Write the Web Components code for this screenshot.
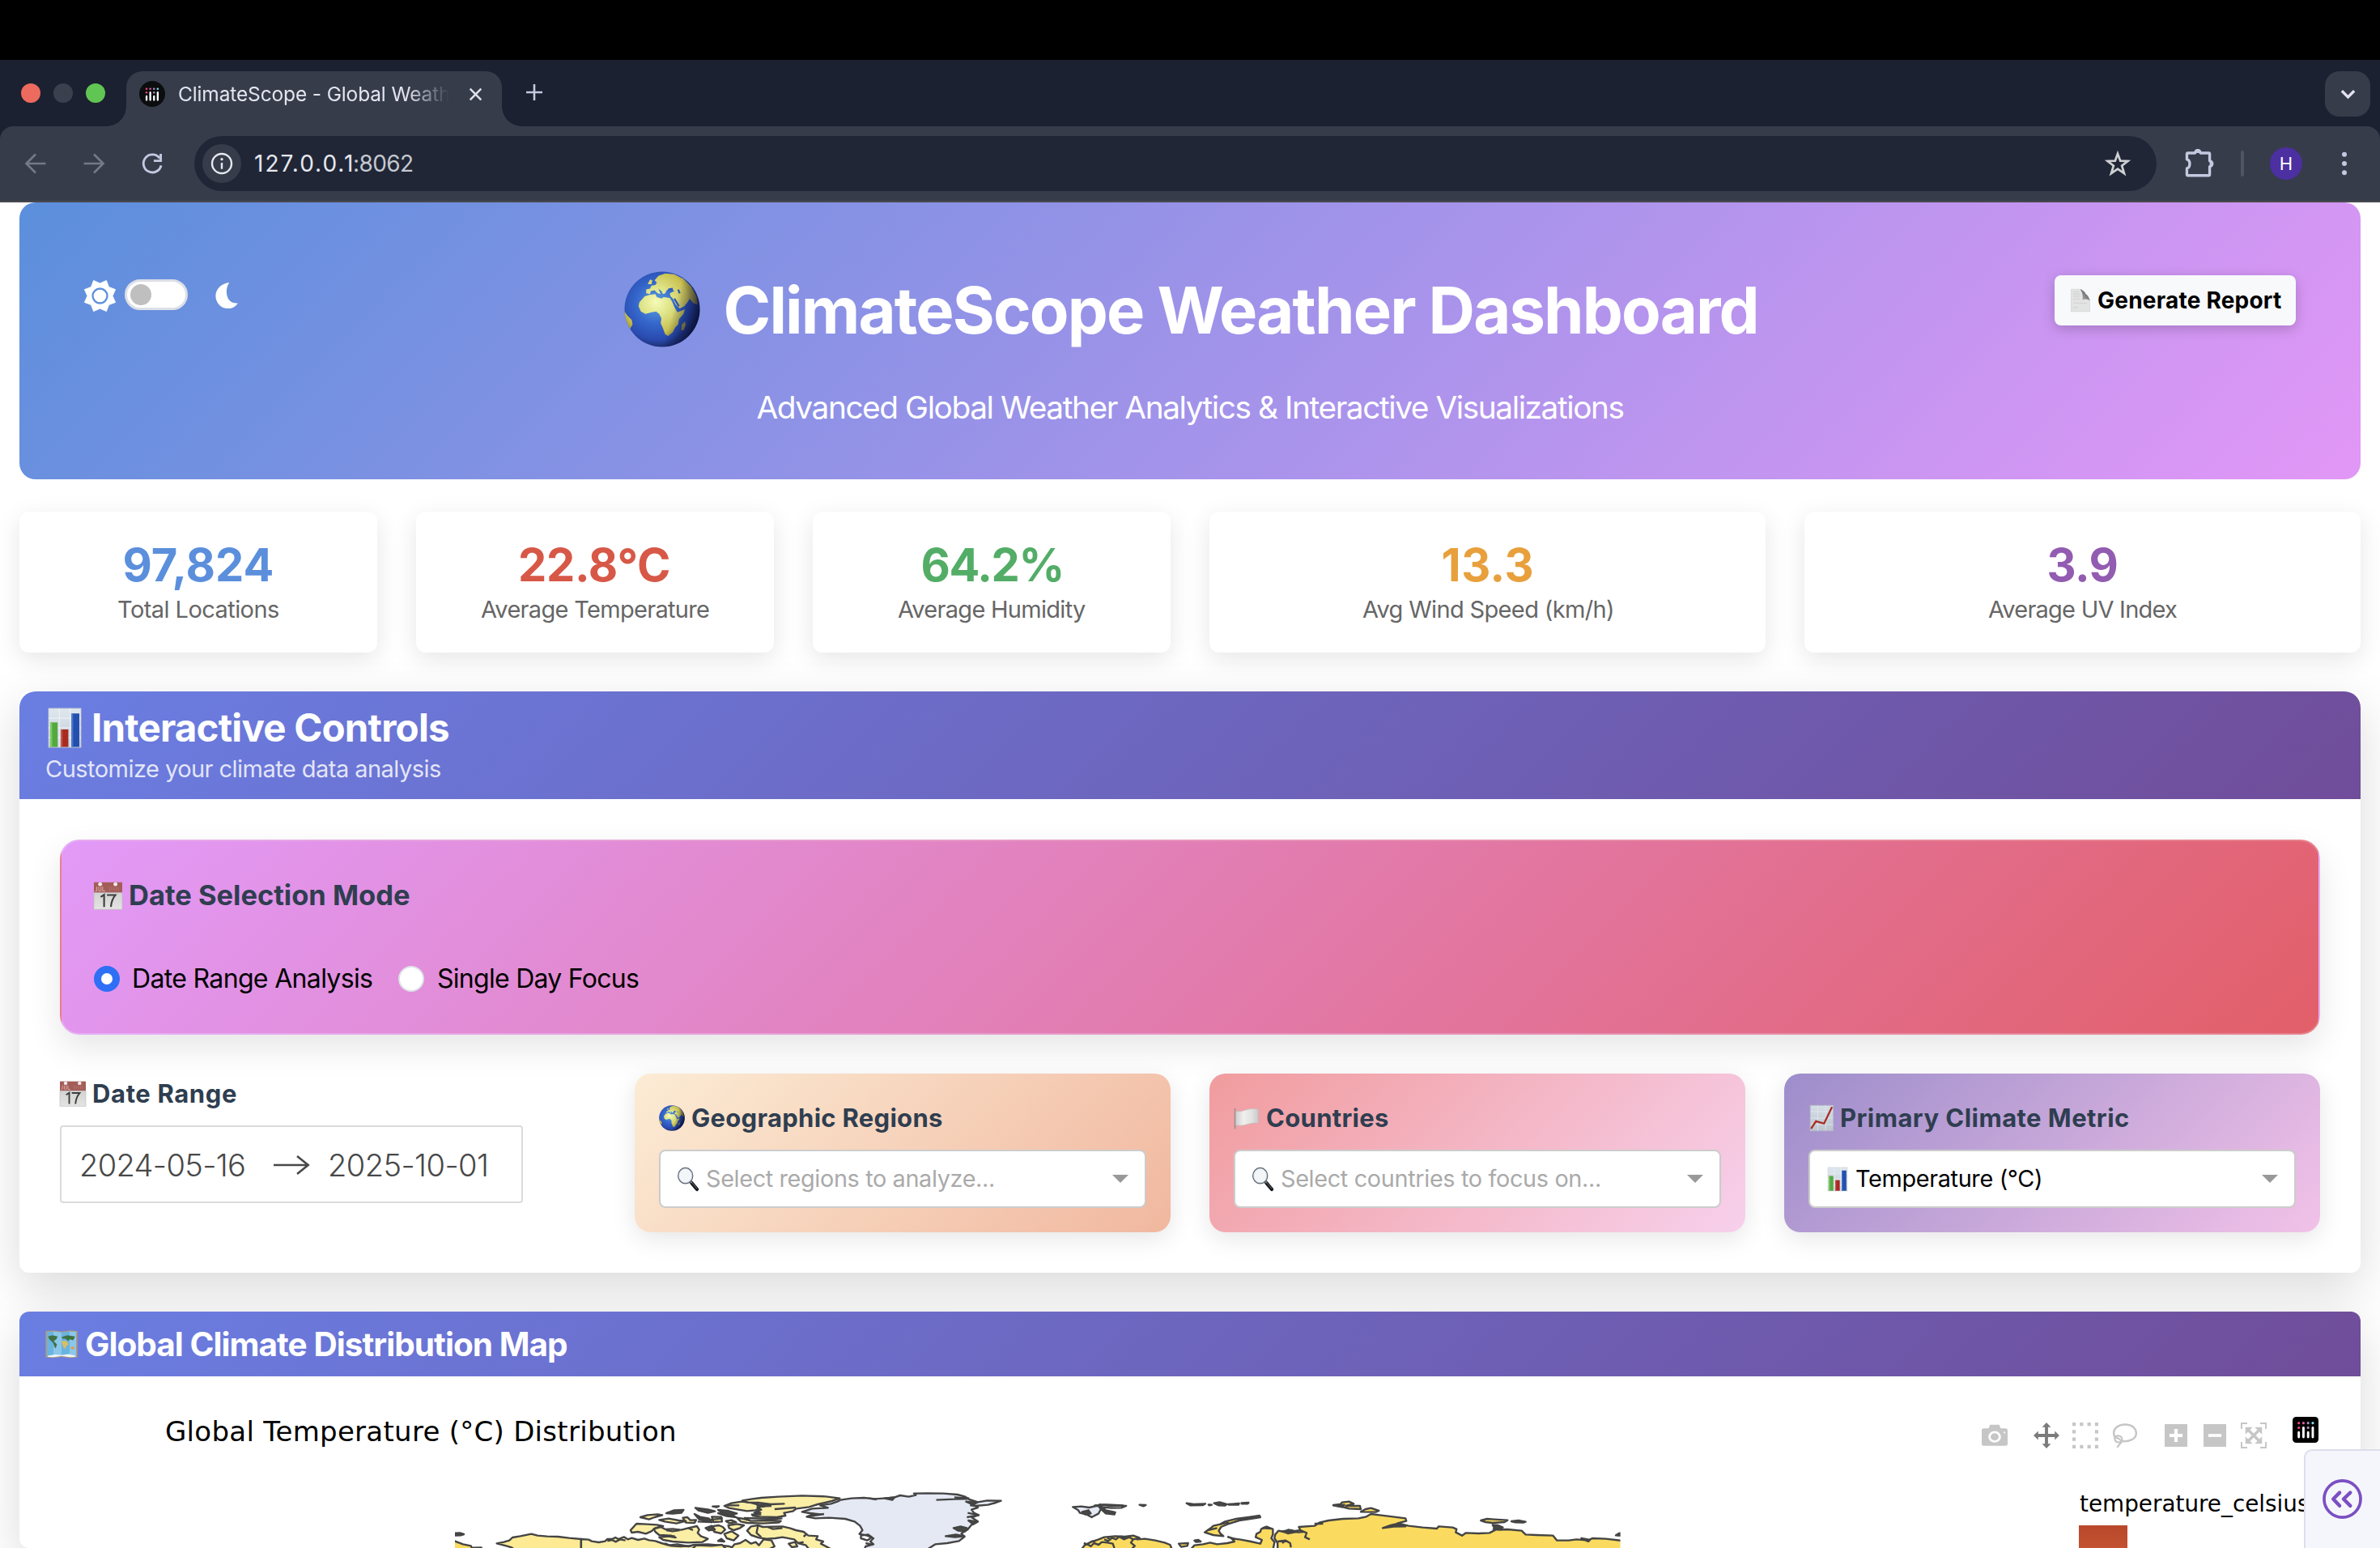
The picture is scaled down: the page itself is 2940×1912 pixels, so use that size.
<!DOCTYPE html>
<html lang="en">
<head>
<meta charset="utf-8">
<title>ClimateScope - Global Weather Dashboard</title>
<style>
html,body{margin:0;height:1912px;width:2940px;overflow:hidden;background:#fff;font-family:Inter,"Liberation Sans",sans-serif}
</style>
</head>
<body>
<climate-app></climate-app>
<script>
const define=(name,html,init)=>customElements.define(name,class extends HTMLElement{
  connectedCallback(){
    if(this.shadowRoot)return;
    const root=this.attachShadow({mode:'open'});
    root.innerHTML=typeof html==='function'?html(this):html;
    if(init)init(this,root);
  }
});
const attr=(e,n,d='')=>e.hasAttribute(n)?e.getAttribute(n):d;

/* One line of text tracked so that its ink fills the given width */
const pen=document.createElement('canvas').getContext('2d');
define('fit-text',e=>`<style>:host{display:block;flex:none;white-space:pre;width:${attr(e,'w')}px;
 font:${attr(e,'weight','400')} ${attr(e,'size')}px/${attr(e,'lh','50')}px ${attr(e,'font','Inter')},sans-serif;color:${attr(e,'color','inherit')}}</style><slot></slot>`,
 e=>{
  const t=e.textContent;
  pen.font=`${attr(e,'weight','400')} ${attr(e,'size')}px ${attr(e,'font','Inter')}, sans-serif`;
  const m=pen.measureText(t),ink=m.actualBoundingBoxLeft+m.actualBoundingBoxRight;
  e.style.letterSpacing=((+attr(e,'w')-ink)/(t.length-1)).toFixed(3)+'px';
  e.style.textIndent=m.actualBoundingBoxLeft.toFixed(2)+'px';
 });

const GLOBE=`<defs><radialGradient id="o" cx=".42" cy=".42" r=".6"><stop offset="0" stop-color="#5fa3d8"/><stop offset=".45" stop-color="#3567cc"/><stop offset=".8" stop-color="#2a4bb0"/><stop offset="1" stop-color="#1c2c6b"/></radialGradient>
<radialGradient id="l" gradientUnits="userSpaceOnUse" cx="42" cy="40" r="55"><stop offset="0" stop-color="#f6fbb8"/><stop offset=".35" stop-color="#dfe488"/><stop offset=".75" stop-color="#c9c050"/><stop offset="1" stop-color="#8c8338"/></radialGradient>
<linearGradient id="s" x1="0" y1=".3" x2="1" y2=".6"><stop offset=".65" stop-color="#061040" stop-opacity="0"/><stop offset="1" stop-color="#060a28" stop-opacity=".75"/></linearGradient><clipPath id="c"><circle cx="50" cy="50" r="49.5"/></clipPath></defs>
<circle cx="50" cy="50" r="49.5" fill="url(#o)"/><g clip-path="url(#c)" fill="url(#l)">
<path d="M27 33L33 31 41 30 43 34 49 36 52 34 60 35 63 40 66 47 70 54 80 50 78 56 72 63 71 70 67 74 64 80 58 85 54 83 51 75 48 68 49 62 46 56 42 53 36 54 28 56 22 53 19 46 20 41Z"/>
<path d="M29 29L29 24 34 23 36 19 41 18 43 15 40 12 45 6 54 3 66 4 78 10 88 20 95 33 97 44 91 42 86 36 84 40 79 46 73 49 68 44 64 36 61 33 60 29 66 26 61 22 56 25 54 29 51 30 49 26 45 23 48 30 44 29 40 25 35 26 34 30Z"/>
<path d="M31 17L34 11 37 12 36 17ZM76 70L80 66 81 71 78 78 75 77ZM0 52L4 58 10 64 11 70 7 77 8 84 2 78Z"/></g>
<g clip-path="url(#c)"><path d="M66 36L72 46M71 24L73 29M58 24L64 23" stroke="#2a56bb" stroke-width="2.4" fill="none"/><circle cx="50" cy="50" r="49.5" fill="url(#s)"/></g>`;
const CAL=`<defs><linearGradient id="g" x2="0" y2="1"><stop offset="0" stop-color="#d2d2d2"/><stop offset="1" stop-color="#e4e4e2"/></linearGradient></defs>
<path d="M0 38H100V98H0Z" fill="url(#g)" stroke="#bdbdbd" stroke-width="2"/><path d="M0 2H100V38H0Z" fill="#a35d59"/><g fill="#fff" fill-opacity=".85"><circle cx="22" cy="9" r="7"/><circle cx="76" cy="9" r="7"/></g>
<path d="M10 18v13q-3 4-5 1M17 18v13q4 5 8 0v-13M31 18v15h9" stroke="#d9aaa5" stroke-width="3" fill="none"/><path d="M55 18v14M63 18v14M71 18v14M79 18v14M87 18v14" stroke="#b4716c" stroke-width="3"/>
<path d="M24 54L36 46V89M46 47H76Q62 64 60 89" stroke="#3d3d3d" stroke-width="6" fill="none"/>`;
const BARS=`<defs><linearGradient id="b" x2="0" y2="1"><stop offset="0" stop-color="#dfe7ee"/><stop offset="1" stop-color="#c3cbd6"/></linearGradient></defs><rect width="100" height="100" fill="url(#b)" stroke="#c3ccd4" stroke-width="2"/>
<path d="M0 25H100M0 50H100M0 75H100M33 0V100M67 0V100" stroke="#f3f6f8" stroke-width="2"/>
<path d="M5 36H28V99H5Z" fill="#53a93f"/><path d="M5 36H11V99H5Z" fill="#7ccb61"/><path d="M38 54H61V99H38Z" fill="#a92a1f"/><path d="M38 54H43V99H38Z" fill="#c5574b"/><path d="M71 13H95V99H71Z" fill="#234fae"/><path d="M71 13H76V99H71Z" fill="#4578cf"/>`;
const MAG=`<path d="M62 64L86 93" stroke="#16181b" stroke-width="15" stroke-linecap="round"/><path d="M66 66L86 90" stroke="#777d85" stroke-width="3"/><path d="M55 55L64 66" stroke="#888" stroke-width="7"/><ellipse cx="37" cy="35" rx="31" ry="33" fill="#f3f6f8" stroke="#5c6470" stroke-width="5"/><ellipse cx="37" cy="35" rx="28" ry="30" fill="none" stroke="#c7d3de" stroke-width="2.5"/>`;
const PLOTLY=`<g><circle cx="24" cy="24" r="5" fill="#ef4278"/><circle cx="42" cy="24" r="5" fill="#d3639e"/><circle cx="60" cy="24" r="5" fill="#a98cc4"/><circle cx="78" cy="24" r="5" fill="#7fdbf2"/><circle cx="24" cy="42" r="5" fill="#ef4278"/><circle cx="60" cy="42" r="5" fill="#a98cc4"/><path d="M24 60V78M42 42V78M60 60V78M78 42V78" stroke="#fff" stroke-width="9" stroke-linecap="round"/></g>`;
/* Eight-pointed sun outline */
const RAYS=Array.from({length:16},(_,i)=>{const a=(22.5+i*22.5)*Math.PI/180,r=i%2?40:53;return (50+r*Math.cos(a)).toFixed(1)+' '+(50+r*Math.sin(a)).toFixed(1)}).join(' ');
const ICONS={
 globe:GLOBE,cal:CAL,bars:BARS,mag:MAG,
 favicon:`<circle cx="50" cy="50" r="50" fill="#0c0d0e"/><g transform="translate(9 11) scale(.8)">${PLOTLY}</g>`,
 plotly:`<rect width="100" height="100" rx="14" fill="#000"/>${PLOTLY}`,
 trend:`<defs><linearGradient id="b" x2="0" y2="1"><stop offset="0" stop-color="#d5dde6"/><stop offset="1" stop-color="#bdc5cf"/></linearGradient></defs><rect x="7" y="1" width="88" height="98" fill="url(#b)" stroke="#b7bcc6" stroke-width="3"/><path d="M7 25H95M7 50H95M7 75H95M36 1V99M66 1V99" stroke="#e8edf2" stroke-width="2"/><path d="M10 91L29 62 60 71 91 7" fill="none" stroke="#a92a20" stroke-width="7"/>`,
 flag:`<defs><linearGradient id="f"><stop offset="0" stop-color="#cfcfcf"/><stop offset=".35" stop-color="#f0f0ee"/><stop offset=".7" stop-color="#e2e2e0"/><stop offset="1" stop-color="#c9c9c9"/></linearGradient></defs><path d="M5 12V92" stroke="#9a8f90" stroke-width="5"/><path d="M8 22C30 32 58 6 95 16V70C62 64 40 86 8 77Z" fill="url(#f)" stroke="#bdb5b6" stroke-width="2"/>`,
 page:`<defs><linearGradient id="d" x1="1" x2="0" y2="1"><stop offset="0" stop-color="#444"/><stop offset="1" stop-color="#bbb"/></linearGradient></defs><path d="M2 1H55L98 48V99H2Z" fill="#e3e3e3" stroke="#c9c9c9" stroke-width="2"/><path d="M12 12H42M12 22H48M12 32H48M12 44H46M12 62H84M12 82H36" stroke="#cacaca" stroke-width="3"/><path d="M48 1Q66 20 60 48Q80 40 98 50Q92 30 78 22Q66 4 48 1Z" fill="url(#d)"/>`,
 worldmap:`<path d="M1 3L25 1 50 5 75 1 99 3V96L75 98 50 94 25 98 1 96Z" fill="#b39c78"/><path d="M5 6L25 4 50 8 75 4 95 6V92L75 94 50 90 25 94 5 92Z" fill="#69b4e0"/><path d="M25 4L50 8V90L25 94ZM75 4L95 6V92L75 94Z" fill="#8cc6ea"/><path d="M8 22L22 18 38 22 34 32 26 38 32 46 36 50 32 64 28 58 24 44 14 34ZM50 24L68 18 92 22 86 36 76 32 70 38 62 30 54 30Z" fill="#3f7242"/><path d="M50 38L66 38 72 50 66 54 62 66 56 60 52 48Z" fill="#d9bd63"/><path d="M78 60L88 58 90 66 82 68Z" fill="#e39a3e"/><path d="M8 90L30 86 50 88 72 84 93 90V94L75 95 50 91 25 95 7 94Z" fill="#eef5f8"/>`,
 sun:`<polygon points="${RAYS}" fill="#fff" stroke="#fff" stroke-width="2" stroke-linejoin="round"/><circle cx="50" cy="50" r="23" fill="none" stroke="#5f90de" stroke-width="6"/>`,
 moon:`<path d="M62 3C42 28 48 82 96 78C82 100 46 104 24 86C-6 58 6 10 62 3Z" fill="#fff"/>`,
 back:`<path d="M76 50H28M50 26L26 50 50 74" fill="none" stroke="#747986" stroke-width="5.6"/>`,
 fwd:`<path d="M24 50H72M50 26L74 50 50 74" fill="none" stroke="#747986" stroke-width="5.6"/>`,
 reload:`<path d="M69 36A23 23 0 1 0 73 55" fill="none" stroke="#c4c9e0" stroke-width="6"/><path d="M72 25V43H54" fill="none" stroke="#c4c9e0" stroke-width="6"/>`,
 info:`<circle cx="50" cy="50" r="50" fill="#373c4b"/><circle cx="50" cy="50" r="25" fill="none" stroke="#e6e8ee" stroke-width="5"/><path d="M50 48V64" stroke="#e6e8ee" stroke-width="5"/><circle cx="50" cy="39" r="3.4" fill="#e6e8ee"/>`,
 star:`<path d="M50 12L60 39.500 89 40.500 66 58.500 75 88 50 71 25 88 34 58.500 11 40.500 40 39.500Z" fill="none" stroke="#cfd0d4" stroke-width="8.500"/>`,
 puzzle:`<path d="M16 19H37A8 8 0 0 1 53 19H77Q80 19 80 22V42A9 9 0 0 1 80 59V82Q80 85 77 85H16Q13 85 13 82V64C24 62 24 40 13 38V22Q13 19 16 19Z" fill="none" stroke="#c4c9e0" stroke-width="8" stroke-linejoin="round"/><path d="M34 19A11 11 0 0 1 56 19ZM80 39A11 11 0 0 1 80 62Z" fill="#c4c9e0"/>`,
 dots:`<g fill="#c4c9e0"><circle cx="50" cy="22" r="7.500"/><circle cx="50" cy="50" r="7.500"/><circle cx="50" cy="78" r="7.500"/></g>`,
 close:`<path d="M10 10L90 90M90 10L10 90" stroke="#dfe1ea" stroke-width="15"/>`,
 plus:`<path d="M50 0V100M0 50H100" stroke="#c4c9e0" stroke-width="13"/>`,
 chev:`<path d="M5 25L50 70 95 25" fill="none" stroke="#e2e3ee" stroke-width="20"/>`,
 camera:`<path d="M8 18H27L32 3H68L73 18H92Q100 18 100 26V85Q100 92 92 92H8Q0 92 0 85V26Q0 18 8 18Z" fill="#c6c6c6"/><circle cx="50" cy="54" r="20" fill="none" stroke="#fff" stroke-width="9"/><ellipse cx="88" cy="36" rx="3" ry="4" fill="#fff"/>`,
 move:`<path d="M50 0L67 18H56V44H82V33L100 50 82 67V56H56V82H67L50 100 33 82H44V56H18V67L0 50 18 33V44H44V18H33Z" fill="#7b7b7b"/>`,
 select:`<g fill="#c6c6c6">${[0,29,58,87].map(a=>`<path d="M${a} 0h13v13h-13zM${a} 87h13v13h-13z"/>`).join('')}${[29,58].map(a=>`<path d="M0 ${a}h13v13h-13zM87 ${a}h13v13h-13z"/>`).join('')}</g>`,
 lasso:`<g fill="none" stroke="#c6c6c6" stroke-width="8"><path d="M12 58C-6 20 28 4 56 5C84 7 98 24 96 42C94 64 66 74 40 71"/><path d="M10 62C10 44 40 46 40 64C40 80 12 80 11 62M12 56C24 58 36 66 38 74L20 96" stroke-width="7"/></g>`,
 zin:`<path d="M0 0H100V100H0Z" fill="#c6c6c6"/><path d="M50 21V79M21 50H79" stroke="#fff" stroke-width="15"/>`,
 zout:`<path d="M0 0H100V100H0Z" fill="#c6c6c6"/><path d="M21 50H79" stroke="#fff" stroke-width="13"/>`,
 auto:`<path d="M3 25V3H25M75 3H97V25M97 75V97H75M25 97H3V75" fill="none" stroke="#c6c6c6" stroke-width="6"/><path d="M28 28L72 72M72 28L28 72" stroke="#c6c6c6" stroke-width="11"/><path d="M18 18H46L18 46ZM82 18V46L54 18ZM82 82H54L82 54ZM18 82V54L46 82Z" fill="#c6c6c6"/>`,
 arrow:`<path d="M0 50H96M66 4L97 50 66 96" fill="none" stroke="#484848" stroke-width="2.600" vector-effect="non-scaling-stroke"/>`,
 collapse:`<g fill="none" stroke="#7b4fc3"><circle cx="50" cy="50" r="46" stroke-width="7.500"/><path d="M43 34L27 50 43 67M70 34L53 50 70 67" stroke-width="9" stroke-linecap="round" stroke-linejoin="round"/></g>`
};
define('ui-icon',e=>`<style>:host{display:block;flex:none;width:${attr(e,'w')}px;height:${attr(e,'h',attr(e,'w'))}px}svg{display:block;width:100%;height:100%;overflow:visible}</style><svg viewBox="0 0 100 100" preserveAspectRatio="none">${ICONS[attr(e,'name')]}</svg>`);

define('browser-tabs',`<style>
:host{display:flex;height:82px;background:#1b2130;align-items:flex-start;box-sizing:border-box}
.lights{display:flex;gap:16px;padding:29px 0 0 26px;width:130px;box-sizing:border-box}
.lights i{width:24px;height:24px;border-radius:50%}
.tab{position:relative;margin-top:14px;width:464px;height:68px;box-sizing:border-box;background:#373c4b;border-radius:20px 20px 0 0;display:flex;align-items:center;padding:0 24px 12px 16px}
.tab:before,.tab:after{content:"";position:absolute;bottom:0;width:24px;height:24px;background:radial-gradient(circle at 0 0,transparent 23.500px,#373c4b 24px)}
.tab:before{left:-24px}.tab:after{right:-24px;background:radial-gradient(circle at 100% 0,transparent 23.500px,#373c4b 24px)}
.t{margin-left:17px;width:334px;overflow:hidden;-webkit-mask:linear-gradient(90deg,#000 84%,transparent)}
.drop{margin:14px 12px 0 auto;width:56px;height:56px;border-radius:18px;background:#373c4b;display:flex;align-items:center;justify-content:center}
</style><div class="lights"><i style="background:#ed6a5e"></i><i style="background:#3b404e"></i><i style="background:#61c554"></i></div>
<div class="tab" style="margin-left:26px"><ui-icon name="favicon" w="32"></ui-icon><div class="t"><fit-text w="334" size="24.5" lh="36" color="#e3e5ee">ClimateScope - Global Weath</fit-text></div><ui-icon style="margin-left:auto" name="close" w="17"></ui-icon></div>
<ui-icon style="margin:30px 0 0 30px" name="plus" w="20"></ui-icon><div class="drop"><ui-icon name="chev" w="17"></ui-icon></div>`);

define('browser-bar',`<style>
:host{display:flex;background:#1b2130}
.bar{flex:1;display:flex;align-items:center;height:94px;box-sizing:border-box;padding:0 24px 0 20px;background:#373c4b;border-bottom:2px solid #48494e;border-radius:16px 16px 0 0}
.url{flex:1;display:flex;align-items:center;height:68px;border-radius:34px;background:#202636;margin-left:28px;padding:0 32px 0 10px}
.div{width:4px;height:32px;border-radius:2px;background:#505565;margin:0 32px 0 30px}
.av{width:40px;height:40px;border-radius:50%;background:#4c2fa0;display:flex;align-items:center;justify-content:center;font:400 22px Inter;color:#fff;margin-right:32px}
</style><div class="bar"><ui-icon name="back" w="48"></ui-icon><ui-icon style="margin:0 24px" name="fwd" w="48"></ui-icon><ui-icon name="reload" w="48"></ui-icon>
<div class="url"><ui-icon name="info" w="48"></ui-icon><fit-text style="margin-left:17px" w="119" size="28" color="#e6e8f0">127.0.0.1</fit-text><fit-text style="margin-left:4px" w="72" size="28" color="#c5c8d0">:8062</fit-text><ui-icon style="margin-left:auto" name="star" w="32"></ui-icon></div>
<ui-icon style="margin-left:32px" name="puzzle" w="42"></ui-icon><div class="div"></div><div class="av">H</div><ui-icon name="dots" w="40"></ui-icon></div>`);

define('app-header',`<style>
:host{display:grid;grid-template-columns:1fr auto 1fr;align-items:start;height:342px;box-sizing:border-box;margin:0 24px;padding:0 80px;border-radius:20px;background:linear-gradient(135deg,#5b8fdc,#e297f6);color:#fff}
.theme{display:flex;align-items:center;height:40px;padding-top:95px}
.sw{box-sizing:border-box;width:78px;height:38px;border:3px solid #dcdfe6;border-radius:19px;background:#fff;margin:-2px 32px 0 11px;padding:3px 4px}
.sw i{display:block;width:26px;height:26px;border-radius:50%;background:#bfbfbf}
.mid{display:flex;flex-direction:column;align-items:center;padding-top:83px}
.title{display:flex;align-items:center}
button{all:unset;justify-self:end;box-sizing:border-box;margin-top:90px;width:298px;height:62px;border-radius:8px;background:#f8f9fb;display:flex;align-items:center;padding-left:20px;color:#000;box-shadow:0 4px 16px rgba(0,0,0,.2)}
</style><div class="theme"><ui-icon name="sun" w="39"></ui-icon><div class="sw"><i></i></div><ui-icon name="moon" w="31" h="34"></ui-icon></div>
<div class="mid"><div class="title"><ui-icon style="margin-top:-3px" name="globe" w="94"></ui-icon><fit-text style="margin-left:32px" w="1273" size="79.500" weight="700" lh="100">ClimateScope Weather Dashboard</fit-text></div><fit-text style="margin-top:40px" w="1071" size="38.800" lh="60">Advanced Global Weather Analytics &amp; Interactive Visualizations</fit-text></div>
<button><ui-icon name="page" w="24" h="28"></ui-icon><fit-text style="margin-left:10px" w="226" size="28" weight="700">Generate Report</fit-text></button>`);

define('stat-card',e=>`<style>:host{display:block;min-width:0}
.c{height:174px;box-sizing:border-box;padding-top:36px;border-radius:12px;background:#fff;box-shadow:0 8px 30px rgba(0,0,0,.1);display:flex;flex-direction:column;align-items:center}</style>
<div class="c"><fit-text w="${attr(e,'vw')}" size="56" weight="700" lh="60" color="${attr(e,'color')}">${attr(e,'value')}</fit-text><fit-text w="${attr(e,'lw')}" size="29" lh="49" color="#666">${attr(e,'label')}</fit-text></div>`);

define('panel-card',e=>`<style>:host{display:block;margin:48px 24px 0;border-radius:12px;background:#fff;box-shadow:0 20px 60px rgba(0,0,0,.15)}
.h{height:${attr(e,'head')}px;box-sizing:border-box;border-radius:${attr(e,'radius')}px ${attr(e,'radius')}px 0 0;background:linear-gradient(135deg,#6a7ee2,#704d9a);color:#fff}</style><div class="h"><slot name="head"></slot></div><slot></slot>`);

define('date-mode',`<style>:host{display:block;height:241px;box-sizing:border-box;border:2px solid rgba(255,255,255,.2);border-radius:24px;padding:42px 40px 0;background:linear-gradient(135deg,#e29af8,#e25f69);box-shadow:0 16px 40px rgba(0,0,0,.1)}
.r{display:flex;align-items:center}.r+.r{margin-top:53px}
i{width:32px;height:32px;box-sizing:border-box;border-radius:50%;background:#fff;border:2px solid #dee2e6;flex:none}
i.on{border:9px solid #2f6ff5}</style>
<div class="r"><ui-icon name="cal" w="35"></ui-icon><fit-text style="margin-left:10px" w="345" size="34.500" weight="700" color="#2f3e50">Date Selection Mode</fit-text></div>
<div class="r"><i class="on"></i><fit-text style="margin-left:17px" w="295" size="32" color="#000">Date Range Analysis</fit-text><i style="margin-left:32px"></i><fit-text style="margin-left:17px" w="248" size="32" color="#000">Single Day Focus</fit-text></div>`);

define('date-range',`<style>:host{display:block;min-width:0}.l,.b{display:flex;align-items:center}
.b{width:572px;height:96px;box-sizing:border-box;margin-top:14px;border:2px solid #dbdbdb;border-radius:4px;padding:2px 0 0 25px}</style>
<div class="l"><ui-icon name="cal" w="32"></ui-icon><fit-text style="margin-left:10px" w="176" size="31" weight="700" color="#2f3e50">Date Range</fit-text></div>
<div class="b"><fit-text w="201" size="38" weight="300" color="#484848">2024-05-16</fit-text><ui-icon style="margin-left:36px" name="arrow" w="44" h="24"></ui-icon><fit-text style="margin-left:26px" w="193" size="38" weight="300" color="#484848">2025-10-01</fit-text></div>`);

define('select-card',e=>`<style>:host{display:block;min-width:0;box-sizing:border-box;height:196px;padding:30px;border-radius:20px;background:linear-gradient(135deg,${attr(e,'from')},${attr(e,'to')});box-shadow:0 8px 30px rgba(0,0,0,.1)}
.l,.s{display:flex;align-items:center}.s{height:72px;box-sizing:border-box;margin-top:15px;background:#fff;border:2px solid #ccc;border-radius:8px;padding:0 20px}
.a{margin-left:auto;border:10px solid transparent;border-top-color:#999;border-bottom:0}</style>
<div class="l"><ui-icon name="${attr(e,'icon')}" w="32"></ui-icon><fit-text style="margin-left:9px" w="${attr(e,'lw')}" size="31" lh="49" weight="700" color="#2f3e50">${attr(e,'label')}</fit-text></div>
<div class="s"><ui-icon style="${attr(e,'vi')==='bars'?'margin:0 3px 0 2px':''}" name="${attr(e,'vi')}" w="${attr(e,'vi')==='bars'?24:29}" h="29"></ui-icon><fit-text style="margin-left:8px" w="${attr(e,'vw')}" size="28.800" color="${attr(e,'vc')}">${attr(e,'value')}</fit-text><div class="a"></div></div>`);

define('world-map',`<style>:host{display:block;margin-left:516px;width:1500px;height:92px}svg{display:block}path{vector-effect:non-scaling-stroke;stroke:#444;stroke-width:2.400;stroke-linejoin:round}.d{fill:#4a4a45}.n{fill:none}.g{fill:#e4e9f4}.y{fill:#fbeea5}.a{fill:#fdea92}.r{fill:#fadb5f}</style>
<svg width="1500" height="92" viewBox="540 1820 1500 92"><clipPath id="k"><path d="M562 1800H2001.500V1920H562Z"/></clipPath><g clip-path="url(#k)">
<g transform="translate(540 1800) scale(.4847 .33333)">
<path class="r" d="M40 308L55 316 66 322 86 328 92 345H40ZM92 335L112 334 118 345H90Z"/><path class="d" d="M44 281L58 280 68 285 60 289 44 290Z"/>
<path class="a" d="M152 319L170 314 184 308 192 297 212 292 240 284 256 290 280 293 308 294 336 299 367 303V345H200L190 334 176 328Z"/>
<path class="y" d="M367 303L386 305 394 311 412 315 428 311 434 303 446 303 454 297 462 303 476 295 486 304 496 299 512 306 528 301 540 307 556 310 572 318 590 326 612 322 640 330 655 324 690 322 720 326 745 330 770 345H367Z"/>
<path class="n" d="M434 310L446 306 455 313 466 304 480 308M580 318L596 328 620 330 648 328"/>
<path class="y" d="M493 270L508 246 535 248 560 250 576 255 556 262 546 274 532 283 512 276 496 279Z"/>
<path class="y" d="M552 265L570 258 582 267 600 265 622 269 640 262 662 255 668 268 664 280 672 292 690 302 676 314 640 316 600 312 576 306 566 296 590 293 608 297 596 290 566 288 556 276Z"/>
<path class="n" d="M584 270L600 274 618 270M640 262L652 270M606 292L575 294"/>
<path class="d" d="M584 207L604 196 628 195 622 206 600 209Z"/><path class="y" d="M518 222L536 214 562 211 574 214 554 222 540 230ZM566 232L590 227 616 234 634 236 610 245 580 238ZM626 224L638 222 645 233 660 232 656 243 634 242Z"/>
<path class="d" d="M658 187L690 193 708 200 690 206 666 197ZM702 182L718 181 712 185ZM656 210L672 222 692 226 700 240 684 236 668 230ZM716 195L740 198 764 208 748 214 728 206ZM716 207L750 213 762 222 738 218Z"/>
<path class="y" d="M700 220L724 221 726 238 704 240ZM736 236L750 233 762 240 744 244Z"/><path class="n" d="M692 232L728 226M664 238L700 240"/>
<path class="y" d="M732 180L750 170 776 164 800 168 820 176 826 185 812 196 790 199 768 194 744 188Z"/>
<path class="y" d="M778 160L800 155 826 150 870 146 930 142 990 145 1026 152 1006 162 970 174 948 184 916 190 906 200 884 206 888 216 866 222 822 220 804 216 824 205 808 206 826 194 816 185 834 182 816 177 850 174 884 172 850 174 818 168 792 167Z"/>
<path class="n" d="M860 192L914 186M820 182L852 180M800 212L826 212M736 178L770 178"/>
<path class="y" d="M764 224L782 228 800 236 840 234 876 236 870 242 830 245 790 243 774 238ZM782 225L860 228 880 226"/>
<path class="y" d="M698 256L718 252 728 258 734 268 724 282 706 276ZM742 252L764 247 782 252 772 262 756 270 744 262ZM732 284L750 274 768 290 756 308 738 300Z"/><path class="d" d="M684 262L700 254 708 268 692 271ZM716 310L724 302 732 312Z"/>
<path class="y" d="M790 272L800 256 818 252 830 258 880 256 900 263 914 270 934 276 946 290 970 292 966 304 984 312 978 320 1010 345H950L940 326 920 318 910 304 880 296 862 300 840 302 820 298 800 288Z"/>
<path class="n" d="M818 252L814 280 826 296M842 258L856 266 880 262M940 286L934 294M920 318L934 314"/>
<path class="y" d="M745 345L758 322 772 318 786 306 800 320 812 314 820 326 832 304 852 308 860 330 840 345ZM896 320L912 314 918 330 904 333ZM646 345L660 326 700 328 726 324 740 345Z"/>
<path class="g" d="M1028 158L1056 152 1088 150 1116 154 1146 151 1166 148 1180 141 1202 146 1220 140 1215 134 1250 133 1290 134 1326 138 1346 146 1356 156 1378 166 1402 160 1437 161 1424 168 1404 176 1372 180 1378 186 1362 194 1368 206 1380 214 1362 222 1378 238 1362 250 1352 268 1336 282 1344 294 1330 310 1300 318 1270 322 1245 345H1088L1092 330 1112 322 1104 312 1112 300 1096 290 1076 284 1084 270 1078 254 1064 238 1040 228 1000 224 964 226 942 220 960 210 930 202 956 190 996 187 976 178 1004 172 1020 164Z"/>
<path class="d" d="M1316 262L1334 256 1350 262 1346 274 1328 272ZM1296 292L1322 286 1344 292 1320 296ZM1354 234L1378 238 1366 248ZM1140 152L1166 148 1160 158ZM1348 164L1376 168 1360 178 1372 180Z"/><path class="n" d="M1272 158L1320 155 1352 154M1318 148L1356 152M1100 152L1120 156M944 206L982 212M942 220L986 210M1080 290L1098 286 1108 296 1096 308 1080 300ZM1352 206L1380 214 1350 222M1092 318L1110 324"/>
</g>
<g transform="translate(1300 1800) scale(.4847 .33333)">
<path class="g" d="M52 184L74 182 94 186 118 178 134 188 122 196 118 208 100 222 88 212 70 206 66 196ZM108 178L134 176 168 179 188 180 176 187 150 188 126 184Z"/><path class="d" d="M76 202L92 196 98 208 84 212ZM120 186L136 196 160 204 158 212 136 208ZM120 175L150 176 180 178 150 180ZM222 176L238 177 232 181ZM342 170L360 174 390 172 384 177 352 178ZM398 175L406 176 400 178ZM412 170L426 166 444 174 440 179 424 178ZM448 174L476 171 474 176 450 176ZM482 169L500 168 498 172 482 172Z"/>
<path class="r" d="M388 278L404 262 410 254 428 248 440 238 468 228 500 222 528 216 530 222 504 228 476 234 450 246 430 258 424 272 428 282 436 292 410 288Z"/><path class="n" d="M396 270L420 262M428 248L450 242"/>
<path class="r" d="M716 177L734 174 738 167 756 164 768 172 748 180 784 180 786 192 756 190 740 184ZM786 202L798 192 812 188 832 198 824 203Z"/><path class="d" d="M716 178L744 176 738 184Z"/>
<path class="r" d="M1092 234L1108 228 1126 230 1160 233 1152 240 1122 243 1104 240Z"/><path class="d" d="M1170 237L1188 234 1206 239 1200 242 1180 241ZM1122 250L1136 252 1148 260 1128 266ZM1436 289L1444 282 1450 280V291Z"/>
<path class="r" d="M350 345L362 326 384 322 402 316 420 322 446 318 464 312 456 300 480 305 506 312 530 320 534 306 518 296 520 284 530 276 532 266 546 258 562 266 562 286 558 300 566 314 562 345ZM574 345L574 318 566 300 568 286 576 272 590 276 602 268 612 274 632 270 628 258 668 254 680 242 704 234 740 228 780 226 800 220 812 210 834 214 868 220 900 226 902 236 880 244 908 254 944 260 980 264 984 256 1020 260 1030 266 1028 278 1044 290 1054 280 1086 282 1114 280 1130 268 1160 267 1196 272 1206 286 1234 288 1276 290 1286 308 1316 308 1336 304 1366 308 1376 300 1410 302 1460 310V345Z"/>
<path class="d" d="M536 262L546 257 556 264ZM842 262L862 252 880 246 900 256 870 257ZM586 274L608 270 622 276 600 282ZM1348 300L1370 306 1366 312Z"/><path class="n" d="M632 270L648 280 644 296 656 304M606 270L626 278 640 276M574 312L594 308 606 318 608 334M594 308L586 318M668 246L690 246M1122 266L1146 268M446 294L466 304"/>
<path class="r" d="M72 345L82 326 98 314 118 304 132 296 160 292 184 294 206 290 222 298 216 304 236 302 262 308 286 316 300 324 306 345ZM322 320L346 318 344 328 328 332ZM362 308L372 306 378 312 366 314Z"/><path class="n" d="M80 318L92 324 98 330 106 318 118 324 126 314 140 316 154 320 160 345M132 304L142 310 152 298 162 304 170 294 182 304 196 296 206 304 218 300M206 304L200 316 210 328 202 340M98 312L110 310M140 298L150 306M174 292L188 300"/>
</g></g></svg>`);

define('plot-area',`<style>:host{display:block;height:212px}.top{display:flex;height:120px;box-sizing:border-box;padding:42px 52px 0 181px}
.bar{display:flex;align-items:center;margin-left:auto;height:62px}
.low{display:flex}.leg{margin-left:528px;padding-top:20px}.cb{width:60px;height:28px;margin-top:9px;background:linear-gradient(#b9482b,#c35232)}</style>
<div class="top"><fit-text w="628" size="34" font="DejaVu Sans" color="#000" lh="52">Global Temperature (°C) Distribution</fit-text>
<div class="bar"><ui-icon name="camera" w="32" h="29"></ui-icon><ui-icon style="margin-left:32px" name="move" w="32"></ui-icon><ui-icon style="margin-left:16px" name="select" w="32"></ui-icon><ui-icon style="margin-left:17px" name="lasso" w="31"></ui-icon><ui-icon style="margin-left:34px" name="zin" w="28"></ui-icon><ui-icon style="margin-left:20px" name="zout" w="28"></ui-icon><ui-icon style="margin-left:18px" name="auto" w="32"></ui-icon><ui-icon style="margin:-14px 0 0 32px" name="plotly" w="32"></ui-icon></div></div>
<div class="low"><world-map></world-map><div class="leg"><fit-text style="margin-left:1px" w="283" size="27.800" font="DejaVu Sans" color="#000" lh="35">temperature_celsius</fit-text><div class="cb"></div></div></div>`);

define('side-toggle',`<style>:host{position:absolute;left:2846px;top:1790px;width:96px;height:124px;box-sizing:border-box;background:#f5f6fb;border:2px solid #dddded;border-radius:10px 0 0 0;padding:35px 0 0 21px}</style><ui-icon name="collapse" w="49"></ui-icon>`);

define('climate-app',`<style>:host{display:block;position:relative;width:2940px;height:1912px;overflow:hidden;background:#fff}
.notch{height:74px;background:#000}.stats{display:grid;grid-template-columns:442px 442px 442px 687px 687px;gap:48px;margin:40px 24px 0}
.row{display:flex;align-items:center}.fields{display:grid;grid-template-columns:repeat(4,minmax(0,1fr));align-items:start;gap:48px;margin-top:48px}.body{padding:50px}</style>
<div class="notch"></div><browser-tabs></browser-tabs><browser-bar></browser-bar><app-header></app-header>
<div class="stats"><stat-card value="97,824" vw="183" label="Total Locations" lw="198" color="#5b8fdc"></stat-card>
<stat-card value="22.8°C" vw="184" label="Average Temperature" lw="282" color="#d75847"></stat-card>
<stat-card value="64.2%" vw="171" label="Average Humidity" lw="232" color="#53ad67"></stat-card>
<stat-card value="13.3" vw="110" label="Avg Wind Speed (km/h)" lw="309" color="#e8a03d"></stat-card>
<stat-card value="3.9" vw="84" label="Average UV Index" lw="233" color="#925cb1"></stat-card></div>
<panel-card head="133" radius="20"><div slot="head" style="padding:20px 0 0 33px"><div class="row"><ui-icon style="margin-left:3px" name="bars" w="40" h="48"></ui-icon><fit-text style="margin-left:16px" w="438" size="47.500" weight="700">Interactive Controls</fit-text></div><fit-text w="487" size="29" lh="51" color="rgba(255,255,255,.82)">Customize your climate data analysis</fit-text></div>
<div class="body"><date-mode></date-mode><div class="fields"><date-range></date-range>
<select-card from="#fcecd5" to="#f1b79f" icon="globe" label="Geographic Regions" lw="309" vi="mag" value="Select regions to analyze..." vw="355" vc="#aaa"></select-card>
<select-card from="#f19c9e" to="#f7d0ec" icon="flag" label="Countries" lw="150" vi="mag" value="Select countries to focus on..." vw="394" vc="#aaa"></select-card>
<select-card from="#9d8dcb" to="#f2c2e8" icon="trend" label="Primary Climate Metric" lw="355" vi="bars" value="Temperature (°C)" vw="228" vc="#000"></select-card></div></div></panel-card>
<panel-card head="80" radius="12"><div slot="head" class="row" style="height:81px;padding-left:32px"><ui-icon name="worldmap" w="40" h="35"></ui-icon><fit-text style="margin-left:10px" w="594" size="40.500" weight="700">Global Climate Distribution Map</fit-text></div><plot-area></plot-area></panel-card>
<side-toggle></side-toggle>`);
</script>
</body>
</html>
